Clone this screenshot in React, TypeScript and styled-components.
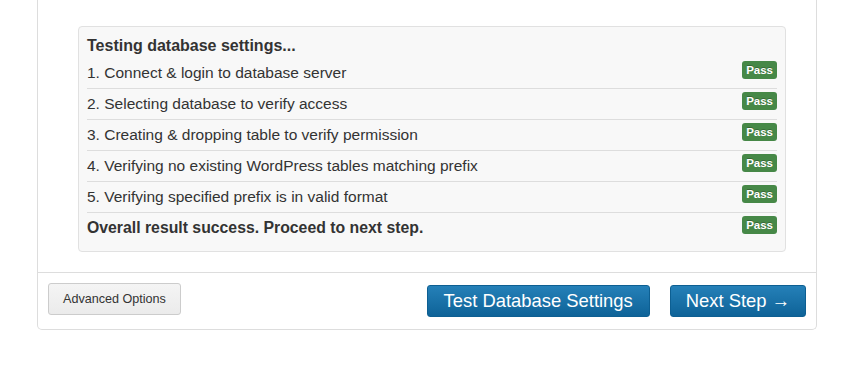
import React from 'react';
import styled, { createGlobalStyle } from 'styled-components';

const GlobalStyle = createGlobalStyle`
  body {
    margin: 0;
    background: #ffffff;
    font-family: 'Liberation Sans', Arial, sans-serif;
    color: #333333;
  }
`;

const Page = styled.div`
  width: 856px;
  height: 368px;
  overflow: hidden;
`;

const Panel = styled.div`
  margin-left: 37px;
  width: 778px;
  border: 1px solid #dddddd;
  border-top: none;
  border-radius: 0 0 5px 5px;
`;

const PanelBody = styled.div`
  padding: 26px 30px 20px 40px;
  border-bottom: 1px solid #dddddd;
`;

const Well = styled.div`
  background: #f8f8f8;
  border: 1px solid #e1e1e1;
  border-radius: 4px;
  padding: 4px 8px 8px 8px;
`;

const Title = styled.div`
  font-size: 16px;
  font-weight: bold;
  line-height: 20px;
  padding: 5px 0 2px;
`;

const Row = styled.div<{ $first?: boolean; $bold?: boolean }>`
  display: flex;
  justify-content: space-between;
  align-items: flex-start;
  padding: 5px 0;
  line-height: 20px;
  font-size: ${(p) => (p.$bold ? '15.8px' : '15.5px')};
  font-weight: ${(p) => (p.$bold ? 'bold' : 'normal')};
  border-top: ${(p) => (p.$first ? 'none' : '1px solid #dddddd')};
`;

const Badge = styled.span`
  margin-top: -2px;
  display: inline-block;
  background: #468847;
  color: #ffffff;
  font-size: 11.5px;
  font-weight: bold;
  line-height: 14px;
  padding: 2px 4px;
  border-radius: 3px;
  text-shadow: 0 -1px 0 rgba(0, 0, 0, 0.25);
`;

const Footer = styled.div`
  display: flex;
  align-items: flex-start;
  padding: 10px 10px 12px 10px;
`;

const DefaultButton = styled.button`
  height: 32px;
  padding: 0 14px;
  font-family: 'Liberation Sans', Arial, sans-serif;
  font-size: 12.6px;
  color: #333333;
  background: linear-gradient(#f4f4f4, #ebebeb);
  border: 1px solid #cccccc;
  border-radius: 3px;
`;

const Spacer = styled.div`
  flex: 1;
`;

const PrimaryButton = styled.button<{ $pad: number }>`
  margin-top: 2px;
  margin-left: 20px;
  height: 32px;
  padding: 0 ${(p) => p.$pad}px;
  font-family: 'Liberation Sans', Arial, sans-serif;
  font-size: 18.4px;
  color: #ffffff;
  background: linear-gradient(#2580b8, #0e6398);
  border: 1px solid #0d5f92;
  border-radius: 3px;
`;

const Arrow = styled.span`
  font-weight: bold;
`;

const steps = [
  '1. Connect & login to database server',
  '2. Selecting database to verify access',
  '3. Creating & dropping table to verify permission',
  '4. Verifying no existing WordPress tables matching prefix',
  '5. Verifying specified prefix is in valid format',
];

export default function App() {
  return (
    <Page>
      <GlobalStyle />
      <Panel>
        <PanelBody>
          <Well>
            <Title>Testing database settings...</Title>
            {steps.map((step, index) => (
              <Row key={index} $first={index === 0}>
                <span>{step}</span>
                <Badge>Pass</Badge>
              </Row>
            ))}
            <Row $bold>
              <span>Overall result success. Proceed to next step.</span>
              <Badge>Pass</Badge>
            </Row>
          </Well>
        </PanelBody>
        <Footer>
          <DefaultButton>Advanced Options</DefaultButton>
          <Spacer />
          <PrimaryButton $pad={16}>Test Database Settings</PrimaryButton>
          <PrimaryButton $pad={15}>
            Next Step <Arrow>→</Arrow>
          </PrimaryButton>
        </Footer>
      </Panel>
    </Page>
  );
}
